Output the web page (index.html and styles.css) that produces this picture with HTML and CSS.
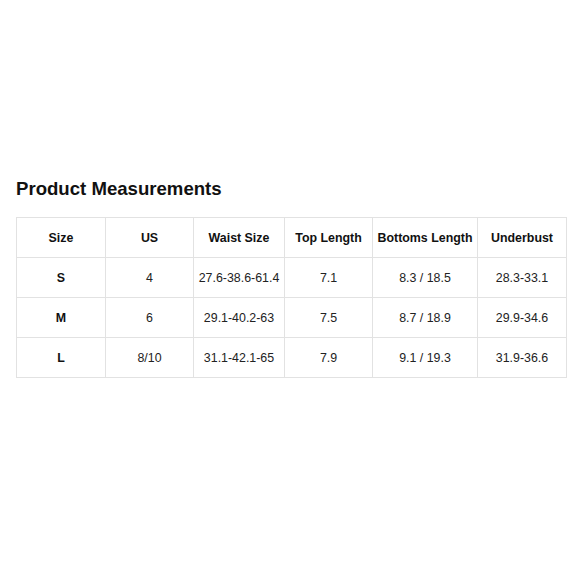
FILE: index.html
```html
<!DOCTYPE html>
<html>
<head>
<meta charset="utf-8">
<link rel="stylesheet" href="styles.css">
</head>
<body>
<div class="page">
  <h2 class="title">Product Measurements</h2>
  <table class="sizes">
    <colgroup>
      <col class="c1"><col class="c2"><col class="c3"><col class="c4"><col class="c5"><col class="c6">
    </colgroup>
    <thead>
      <tr><th>Size</th><th>US</th><th>Waist Size</th><th>Top Length</th><th>Bottoms Length</th><th>Underbust</th></tr>
    </thead>
    <tbody>
      <tr><th>S</th><td>4</td><td>27.6-38.6-61.4</td><td>7.1</td><td>8.3 / 18.5</td><td>28.3-33.1</td></tr>
      <tr><th>M</th><td>6</td><td>29.1-40.2-63</td><td>7.5</td><td>8.7 / 18.9</td><td>29.9-34.6</td></tr>
      <tr><th>L</th><td>8/10</td><td>31.1-42.1-65</td><td>7.9</td><td>9.1 / 19.3</td><td>31.9-36.6</td></tr>
    </tbody>
  </table>
</div>
</body>
</html>
```
FILE: styles.css
```css
html, body {
  margin: 0;
  padding: 0;
  background: #fff;
}
.page {
  padding: 178px 14px 0 16px;
  font-family: "Liberation Sans", Arial, sans-serif;
  color: #111;
}
.title {
  margin: 0 0 17px 0;
  font-size: 18.6px;
  line-height: 22px;
  font-weight: bold;
  color: #111;
}
.sizes {
  border-collapse: collapse;
  table-layout: fixed;
  width: 550px;
}
.c1 { width: 89px; }
.c2 { width: 88px; }
.c3 { width: 91px; }
.c4 { width: 88px; }
.c5 { width: 105px; }
.c6 { width: 89px; }
.sizes th, .sizes td {
  border: 1px solid #e2e2e2;
  height: 39px;
  padding: 0;
  text-align: center;
  vertical-align: middle;
  font-size: 12.4px;
  color: #222;
}
.sizes th { font-weight: bold; color: #111; }
.sizes td { font-weight: normal; }
```
